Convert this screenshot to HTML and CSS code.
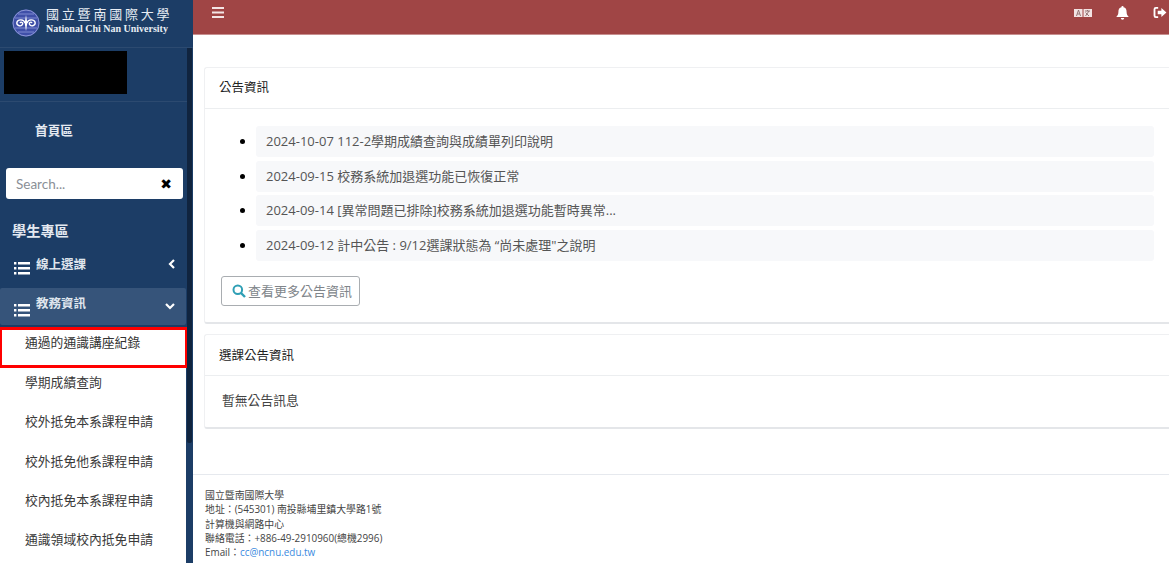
FILE: index.html
```html
<!DOCTYPE html>
<html lang="zh-Hant">
<head>
<meta charset="utf-8">
<title>國立暨南國際大學</title>
<link rel="stylesheet" href="styles.css">
</head>
<body>
<div class="app">
  <aside class="sidebar">
    <div class="brand">
      <svg class="logo" width="28" height="28" viewBox="0 0 28 28">
        <circle cx="14" cy="14" r="13.500" fill="#3f4fa8"/>
        <circle cx="14" cy="14" r="13" fill="none" stroke="#8d97d6" stroke-width="1"/>
        <path d="M3 9h22M3 19h22M6 5l16 0M6 23h16" stroke="#7f8bd0" stroke-width="1" fill="none"/>
        <path d="M13 14c-1-4-7-4-8-1s3 5 5 3-1-4-2-2" stroke="#fff" stroke-width="1.400" fill="none"/>
        <path d="M15 14c1-4 7-4 8-1s-3 5-5 3 1-4 2-2" stroke="#fff" stroke-width="1.400" fill="none"/>
        <path d="M14 6l1.300 8-1.300 8-1.300-8z" fill="#fff"/>
      </svg>
      <div class="brand-text">
        <div class="brand-zh">國立暨南國際大學</div>
        <div class="brand-en">National Chi Nan University</div>
      </div>
    </div>
    <div class="side-body">
      <div class="side-scroll">
        <div class="user"><div class="redact"></div></div>
        <div class="home">首頁區</div>
        <div class="search"><span class="search-ph">Search...</span><span class="search-x">✖</span></div>
        <div class="section">學生專區</div>
        <div class="menu">
          <svg class="list-ic" width="16" height="14" viewBox="0 0 16 14"><path d="M0 1h2.400v2.400H0zM4 1h12v2.400H4zM0 6h2.400v2.400H0zM4 6h12v2.400H4zM0 11h2.400v2.400H0zM4 11h12v2.400H4z" fill="#fff"/></svg>
          <span class="menu-label">線上選課</span>
          <svg class="chev" width="8" height="10" viewBox="0 0 8 10"><path d="M6 1L2 5l4 4" fill="none" stroke="#fff" stroke-width="2.200"/></svg>
        </div>
        <div class="menu active">
          <svg class="list-ic" width="16" height="14" viewBox="0 0 16 14"><path d="M0 1h2.400v2.400H0zM4 1h12v2.400H4zM0 6h2.400v2.400H0zM4 6h12v2.400H4zM0 11h2.400v2.400H0zM4 11h12v2.400H4z" fill="#fff"/></svg>
          <span class="menu-label">教務資訊</span>
          <svg class="chev" width="10" height="8" viewBox="0 0 10 8"><path d="M1 2l4 4 4-4" fill="none" stroke="#fff" stroke-width="2.200"/></svg>
        </div>
        <ul class="sub">
          <li class="sub-item hilite">通過的通識講座紀錄</li>
          <li class="sub-item">學期成績查詢</li>
          <li class="sub-item">校外抵免本系課程申請</li>
          <li class="sub-item">校外抵免他系課程申請</li>
          <li class="sub-item">校內抵免本系課程申請</li>
          <li class="sub-item">通識領域校內抵免申請</li>
        </ul>
      </div>
      <div class="scrolltrack"><div class="scrollthumb"></div></div>
    </div>
  </aside>
  <div class="main">
    <header class="topbar">
      <svg class="burger" width="12" height="11" viewBox="0 0 12 11"><path d="M0 0h12v2H0zM0 4.500h12v2H0zM0 9h12v2H0z" fill="#f4e6e6"/></svg>
      <div class="top-right">
        <svg width="18" height="8" viewBox="0 0 18 8"><rect width="18" height="8" fill="#f3e3e3"/><path d="M9 0v8" stroke="#a04545"/><path d="M2.500 7l2-6 2 6M3.400 5h2.200M11 2h5M13.500 1v1M11.500 7l3.500-5M11.500 3.500L15 7" stroke="#8a6a6a" stroke-width=".9" fill="none"/></svg>
        <svg width="13" height="14" viewBox="0 0 13 14"><path d="M6.500 0a1 1 0 0 1 1 1.200C9.800 1.700 10.600 3.400 10.600 6c0 2.500 1 3.700 2.200 5H.2c1.200-1.300 2.200-2.500 2.200-5 0-2.600.8-4.300 3.100-4.800A1 1 0 0 1 6.500 0zM4.800 12h3.400a1.700 1.700 0 0 1-3.400 0z" fill="#fff"/></svg>
        <svg width="14" height="11" viewBox="0 0 14 12"><path d="M5 1H2.500A1.500 1.500 0 0 0 1 2.500v7A1.500 1.500 0 0 0 2.500 11H5" fill="none" stroke="#fff" stroke-width="2"/><path d="M8.500 1L14 6l-5.500 5V8H4.500V4h4z" fill="#fff"/></svg>
      </div>
    </header>
    <main class="content">
      <section class="card">
        <h2 class="card-title">公告資訊</h2>
        <div class="card-body">
          <ul class="news">
            <li><div class="news-item">2024-10-07 112-2學期成績查詢與成績單列印說明</div></li>
            <li><div class="news-item">2024-09-15 校務系統加退選功能已恢復正常</div></li>
            <li><div class="news-item">2024-09-14 [異常問題已排除]校務系統加退選功能暫時異常...</div></li>
            <li><div class="news-item">2024-09-12 計中公告 : 9/12選課狀態為 “尚未處理"之說明</div></li>
          </ul>
          <button class="more">
            <svg width="14" height="14" viewBox="0 0 14 14"><circle cx="5.800" cy="5.800" r="4.300" fill="none" stroke="#2f9fb5" stroke-width="2"/><path d="M9 9l4 4" stroke="#2f9fb5" stroke-width="2.400"/></svg>
            查看更多公告資訊
          </button>
        </div>
      </section>
      <section class="card second">
        <h2 class="card-title">選課公告資訊</h2>
        <div class="card-body plain">暫無公告訊息</div>
      </section>
    </main>
    <footer class="footer">
      <div>國立暨南國際大學</div>
      <div>地址：(545301) 南投縣埔里鎮大學路1號</div>
      <div>計算機與網路中心</div>
      <div>聯絡電話：+886-49-2910960(總機2996)</div>
      <div>Email：<a class="mail">cc@ncnu.edu.tw</a></div>
    </footer>
  </div>
</div>
</body>
</html>
```
FILE: styles.css
```css
* { box-sizing: border-box; }
html, body { margin: 0; height: 100%; overflow: hidden; }
body { font-family: "Open Sans", "Noto Sans CJK TC", sans-serif; color: #333; background: #fff; }
.app { display: flex; height: 563px; overflow: hidden; }

.sidebar { width: 193px; flex: none; background: #1c3d66; display: flex; flex-direction: column; color: #fff; }
.brand { height: 48px; flex: none; display: flex; align-items: center; gap: 6px; padding: 0 0 0 12px; border-bottom: 1px solid #2c4a70; }
.logo { flex: none; margin-top: -1px; }
.brand-text { font-family: "Liberation Serif", "Noto Sans CJK TC", serif; color: #e8edf4; margin-top: -6px; }
.brand-zh { font-size: 13px; line-height: 17px; letter-spacing: 2.800px; white-space: nowrap; }
.brand-en { font-size: 10px; line-height: 12px; font-weight: 700; white-space: nowrap; }

.side-body { display: flex; flex: 1; min-height: 0; }
.side-scroll { width: 187px; flex: none; }
.scrolltrack { width: 6px; flex: none; }
.scrollthumb { height: 395px; background: #10243f; margin-right: 1px; border-radius: 0 0 2px 2px; }

.user { height: 54px; padding: 3px 0 0 4px; border-bottom: 1px solid #2c4a70; }
.redact { width: 123px; height: 43px; background: #000; }
.home { height: 66px; padding: 19px 0 0 35px; font-size: 12.700px; line-height: 18px; font-weight: 700; color: #e4e9f0; }
.search { height: 31px; margin: 0 4px 0 6px; background: #fff; border-radius: 3px; display: flex; align-items: center; justify-content: space-between; padding: 0 11px 0 10px; }
.search-ph { font-size: 13.500px; color: #8a8f96; font-family: "Lato", sans-serif; }
.search-x { font-size: 14px; color: #000; font-family: "DejaVu Sans", sans-serif; }
.section { height: 24px; margin-top: 20px; padding-left: 12px; font-size: 14.200px; line-height: 24px; font-weight: 700; color: #e4e9f0; }
.menu { height: 37px; margin-top: 3px; display: flex; align-items: center; padding: 0 11px 0 14px; font-size: 12.500px; font-weight: 700; color: #dfe5ed; }
.menu.active { background: #36547a; margin-top: 5px; width: 186px; border-radius: 2px; }
.list-ic { flex: none; margin-top: 7px; }
.menu-label { flex: 1; padding-left: 6px; line-height: 14px; margin-top: 1px; }
.menu.active .menu-label { margin-top: -5px; }
.chev { flex: none; margin-top: -2px; }

.sub { list-style: none; margin: 2px 0 0; padding: 0; background: #fff; width: 186px; }
.sub-item { height: 39.300px; padding-left: 25px; font-size: 12.800px; line-height: 28px; color: #3a3a3a; white-space: nowrap; }
.sub-item.hilite { height: 41px; border: 3px solid #f00; border-left-width: 2px; padding-left: 23px; line-height: 24px; width: 188px; color: #333; }

.main { flex: 1; min-width: 0; display: flex; flex-direction: column; }
.topbar { height: 35px; flex: none; background: #a04545; display: flex; align-items: center; justify-content: space-between; padding: 0 2px 9px 19px; border-bottom: 1px solid #c78f8f; }
.burger { flex: none; }
.top-right { display: flex; align-items: center; gap: 24px; }
.content { flex: 1; padding: 32px 0 0 11px; background: #fff; }
.card { background: #fff; border: 1px solid #eff0f2; border-right: 0; border-bottom: 2px solid #e4e6e9; border-radius: 3px 0 0 3px; }
.second { margin-top: 10px; }
.card-title { margin: 0; height: 41px; padding: 0 14px; font-size: 12.500px; line-height: 40px; font-weight: 400; color: #222; border-bottom: 1px solid #eceef0; }
.second .card-title { line-height: 42px; }
.card-body { padding: 17px 15px 16px 16px; }
.card-body.plain { padding: 14px 16px 15px 17px; font-size: 12.800px; line-height: 20px; height: 51px; color: #444; }
.news { margin: 0; padding: 0 0 0 35px; font-size: 13px; }
.news li { margin-bottom: 3.600px; color: #000; }
.news-item { height: 31px; line-height: 30px; padding-left: 10px; background: #f7f8fa; border-radius: 3px; color: #555; white-space: nowrap; }
.more { display: flex; align-items: center; gap: 2px; width: 139px; height: 30px; margin-top: 15px; padding: 0 0 0 10px; background: #fff; border: 1px solid #a9adb1; border-radius: 3px; color: #80858a; font-family: inherit; font-size: 13px; }
.footer { height: 89px; flex: none; padding: 13px 0 0 12px; border-top: 1px solid #e6e9ee; font-size: 9.900px; line-height: 14.300px; color: #444; }
.mail { color: #3b8be0; }
```
